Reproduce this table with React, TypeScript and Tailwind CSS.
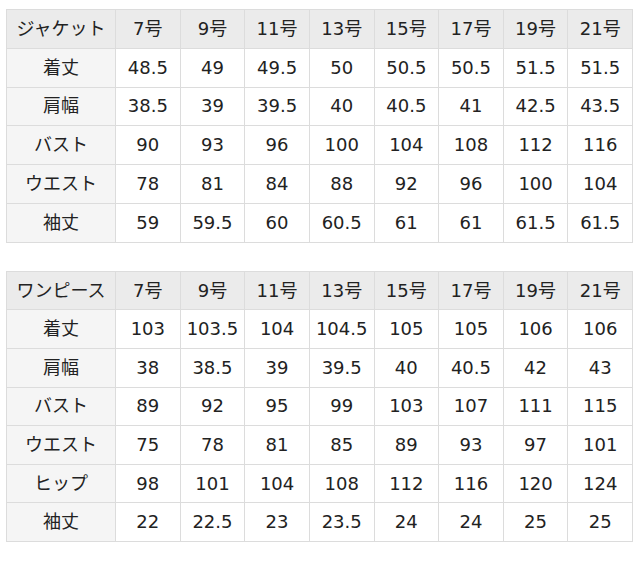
import React from "react";

const sizes = ["7号", "9号", "11号", "13号", "15号", "17号", "19号", "21号"];

const jacket: [string, string[]][] = [
  ["着丈", ["48.5", "49", "49.5", "50", "50.5", "50.5", "51.5", "51.5"]],
  ["肩幅", ["38.5", "39", "39.5", "40", "40.5", "41", "42.5", "43.5"]],
  ["バスト", ["90", "93", "96", "100", "104", "108", "112", "116"]],
  ["ウエスト", ["78", "81", "84", "88", "92", "96", "100", "104"]],
  ["袖丈", ["59", "59.5", "60", "60.5", "61", "61", "61.5", "61.5"]],
];

const onepiece: [string, string[]][] = [
  ["着丈", ["103", "103.5", "104", "104.5", "105", "105", "106", "106"]],
  ["肩幅", ["38", "38.5", "39", "39.5", "40", "40.5", "42", "43"]],
  ["バスト", ["89", "92", "95", "99", "103", "107", "111", "115"]],
  ["ウエスト", ["75", "78", "81", "85", "89", "93", "97", "101"]],
  ["ヒップ", ["98", "101", "104", "108", "112", "116", "120", "124"]],
  ["袖丈", ["22", "22.5", "23", "23.5", "24", "24", "25", "25"]],
];

function SizeTable({ title, rows, rowH }: { title: string; rows: [string, string[]][]; rowH: string }) {
  return (
    <table className="w-[627px] border-collapse table-fixed text-[18px] leading-none text-[#222]">
      <colgroup>
        <col className="w-[109px]" />
        {sizes.map((s) => (
          <col key={s} />
        ))}
      </colgroup>
      <tbody>
        <tr className={rowH}>
          <td className="border border-[#dcdcdc] bg-[#ebebeb] text-center p-0">{title}</td>
          {sizes.map((s) => (
            <td key={s} className="border border-[#dcdcdc] bg-[#ebebeb] text-center p-0">
              {s}
            </td>
          ))}
        </tr>
        {rows.map(([label, vals]) => (
          <tr key={label} className={rowH}>
            <td className="border border-[#dcdcdc] bg-[#f5f5f5] text-center p-0">{label}</td>
            {vals.map((v, i) => (
              <td key={i} className="border border-[#dcdcdc] bg-white text-center p-0">
                {v}
              </td>
            ))}
          </tr>
        ))}
      </tbody>
    </table>
  );
}

export default function App() {
  return (
    <div
      className="w-[640px] h-[568px] bg-white pt-[9px] pl-[6px]"
      style={{ fontFamily: '"DejaVu Sans", "Noto Sans CJK JP", sans-serif' }}
    >
      <SizeTable title="ジャケット" rows={jacket} rowH="h-[38.8px]" />
      <div className="h-[28px]" />
      <SizeTable title="ワンピース" rows={onepiece} rowH="h-[38.6px]" />
    </div>
  );
}
